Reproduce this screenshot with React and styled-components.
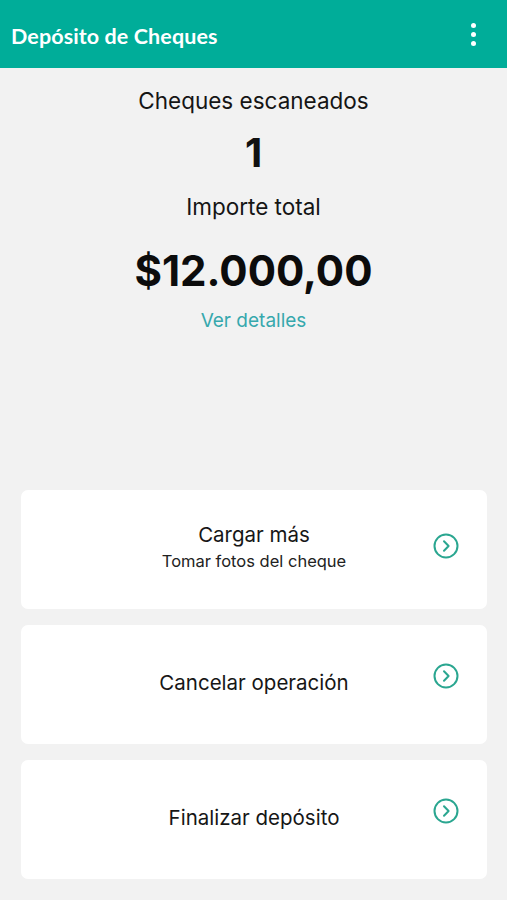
import React from "react";
import styled, { createGlobalStyle } from "styled-components";

const GlobalStyle = createGlobalStyle`
  html, body {
    margin: 0;
    padding: 0;
    background: #f2f2f2;
  }
  body {
    font-family: Inter, "Open Sans", "Liberation Sans", sans-serif;
    -webkit-font-smoothing: antialiased;
  }
`;

const Page = styled.div`
  width: 507px;
  min-height: 900px;
  background: #f2f2f2;
  display: flex;
  flex-direction: column;
`;

const TopBar = styled.header`
  height: 68px;
  background: #00ad99;
  display: flex;
  align-items: center;
  justify-content: space-between;
  padding: 0 29px 0 11px;
  box-sizing: border-box;
`;

const Title = styled.h1`
  margin: 3px 0 0;
  font-family: Lato, "Open Sans", sans-serif;
  font-weight: 700;
  font-size: 21.5px;
  color: #ffffff;
  letter-spacing: 0.1px;
`;

const MenuButton = styled.button`
  border: 0;
  background: transparent;
  padding: 0;
  width: 10px;
  display: flex;
  flex-direction: column;
  align-items: center;
  gap: 4px;
  cursor: pointer;
`;

const Dot = styled.span`
  width: 5px;
  height: 5px;
  border-radius: 50%;
  background: #ffffff;
`;

const Summary = styled.section`
  display: flex;
  flex-direction: column;
  align-items: center;
  padding-top: 19px;
  color: #111;
`;

const Label = styled.div`
  font-size: 22.5px;
  line-height: 28px;
  font-weight: 400;
  color: #151515;
`;

const Count = styled.div`
  font-size: 40px;
  line-height: 48px;
  font-weight: 700;
  margin: 14px 0 16px;
`;

const Amount = styled.div`
  font-size: 42px;
  line-height: 50px;
  font-weight: 700;
  margin: 25px 0 13px;
  color: #0c0c0c;
`;

const DetailsLink = styled.a`
  font-size: 19px;
  line-height: 24px;
  color: #36a8ad;
  text-decoration: none;
`;

const Actions = styled.div`
  display: flex;
  flex-direction: column;
  gap: 16px;
  padding: 0 20px 0 21px;
  margin-top: 157px;
`;

const ActionCard = styled.button`
  position: relative;
  height: 119px;
  border: 0;
  border-radius: 7px;
  background: #ffffff;
  display: flex;
  flex-direction: column;
  align-items: center;
  justify-content: center;
  gap: 3px;
  cursor: pointer;
  font-family: inherit;
  padding: 0 0 ${(p) => (p.$sub ? "6px" : "4px")};
`;

const CardTitle = styled.span`
  font-size: 20.5px;
  line-height: 26px;
  color: #161616;
`;

const CardSub = styled.span`
  font-size: 16.5px;
  line-height: 20px;
  color: #222;
`;

const Chevron = styled.svg`
  position: absolute;
  right: 28px;
  top: 50%;
  margin-top: ${(p) => (p.$sub ? "-17px" : "-22px")};
  width: 26px;
  height: 26px;
`;

const ArrowIcon = ({ sub }) => (
  <Chevron $sub={sub} viewBox="0 0 26 26" fill="none">
    <circle cx="13" cy="13" r="11.5" stroke="#2aa690" strokeWidth="2" />
    <path
      d="M11 8.2 L15.6 13 L11 17.8"
      stroke="#2aa690"
      strokeWidth="2"
      strokeLinecap="round"
      strokeLinejoin="round"
    />
  </Chevron>
);

const actions = [
  { title: "Cargar más", sub: "Tomar fotos del cheque" },
  { title: "Cancelar operación" },
  { title: "Finalizar depósito" },
];

export default function App() {
  return (
    <>
      <GlobalStyle />
      <Page>
        <TopBar>
          <Title>Depósito de Cheques</Title>
          <MenuButton aria-label="Menú">
            <Dot />
            <Dot />
            <Dot />
          </MenuButton>
        </TopBar>

        <Summary>
          <Label>Cheques escaneados</Label>
          <Count>1</Count>
          <Label>Importe total</Label>
          <Amount>$12.000,00</Amount>
          <DetailsLink href="#detalles">Ver detalles</DetailsLink>
        </Summary>

        <Actions>
          {actions.map((a) => (
            <ActionCard key={a.title} $sub={!!a.sub}>
              <CardTitle>{a.title}</CardTitle>
              {a.sub && <CardSub>{a.sub}</CardSub>}
              <ArrowIcon sub={!!a.sub} />
            </ActionCard>
          ))}
        </Actions>
      </Page>
    </>
  );
}
